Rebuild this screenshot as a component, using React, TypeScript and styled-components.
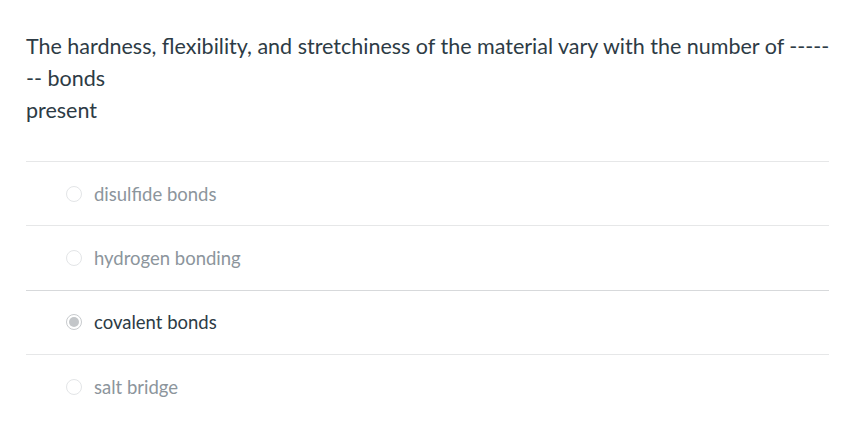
import React from 'react';
import styled, { createGlobalStyle } from 'styled-components';

const GlobalStyle = createGlobalStyle`
  html, body {
    margin: 0;
    padding: 0;
    background: #ffffff;
  }
  body {
    font-family: Lato, "Liberation Sans", Arial, sans-serif;
  }
`;

const Page = styled.div`
  padding: 30px 12px 0 26px;
  width: 803px;
`;

const Question = styled.div`
  font-size: 21.5px;
  line-height: 32px;
  color: #2d3b45;
  white-space: nowrap;
  margin-bottom: 35px;
`;

const Answers = styled.div`
  display: flex;
  flex-direction: column;
`;

const AnswerRow = styled.label`
  display: flex;
  align-items: center;
  gap: 12px;
  height: 64.3px;
  padding-left: 40px;
  border-top: 1px solid #e6e7e8;
  box-sizing: border-box;
  &:nth-child(3) {
    border-top-color: #d7d9db;
  }
`;

const Radio = styled.span<{ $checked?: boolean }>`
  width: 16px;
  height: 16px;
  border-radius: 50%;
  border: 1px solid ${p => (p.$checked ? '#c8cbce' : '#e3e5e7')};
  background: #fff;
  box-sizing: border-box;
  display: flex;
  align-items: center;
  justify-content: center;
  flex-shrink: 0;
  &::after {
    content: '';
    width: 10px;
    height: 10px;
    border-radius: 50%;
    background: ${p => (p.$checked ? '#c3c6c9' : 'transparent')};
  }
`;

const AnswerText = styled.span<{ $checked?: boolean }>`
  font-size: 18.5px;
  color: ${p => (p.$checked ? '#2d3b45' : '#8c959c')};
`;

const answers = [
  { text: 'disulfide bonds', checked: false },
  { text: 'hydrogen bonding', checked: false },
  { text: 'covalent bonds', checked: true },
  { text: 'salt bridge', checked: false },
];

export default function App() {
  return (
    <>
      <GlobalStyle />
      <Page>
        <Question>
          The hardness, flexibility, and stretchiness of the material vary with the number of -----
          <br />
          -- bonds
          <br />
          present
        </Question>
        <Answers>
          {answers.map(a => (
            <AnswerRow key={a.text}>
              <Radio $checked={a.checked} />
              <AnswerText $checked={a.checked}>{a.text}</AnswerText>
            </AnswerRow>
          ))}
        </Answers>
      </Page>
    </>
  );
}
